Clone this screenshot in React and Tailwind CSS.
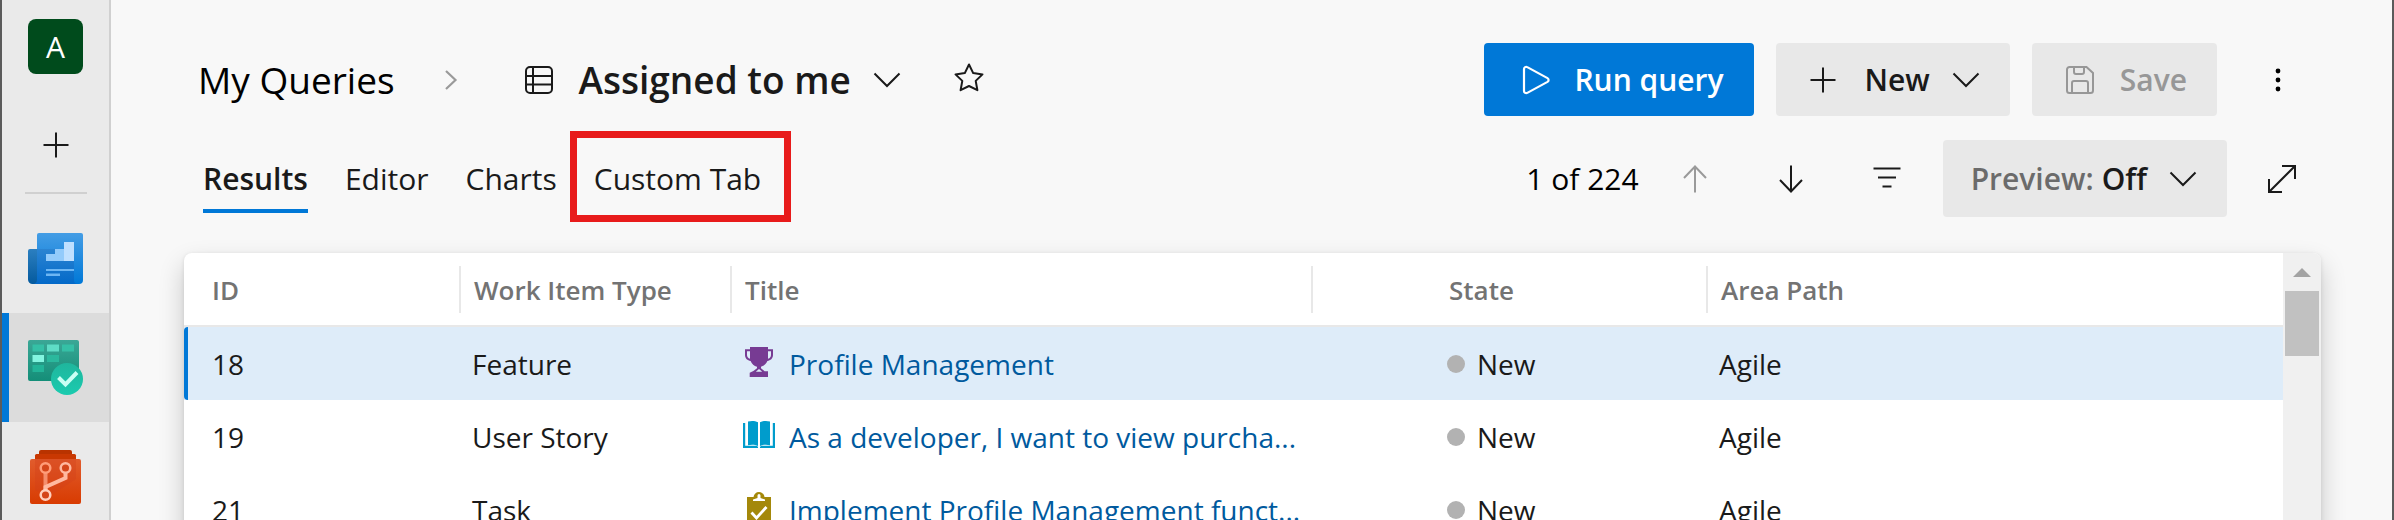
import React from 'react';

function Icon({ children, size = 'size-8', viewBox = '0 0 32 32', className = '' }) {
  return (
    <svg
      aria-hidden="true"
      viewBox={viewBox}
      className={`shrink-0 ${size} ${className}`}
      fill="none"
      stroke="currentColor"
      strokeWidth="2"
    >
      {children}
    </svg>
  );
}

const ChevronDown = () => (
  <Icon>
    <path d="M3.500 9.500 16 22 28.500 9.500" />
  </Icon>
);

const PlusIcon = () => (
  <Icon>
    <path d="M16 3.500v25M3.500 16h25" />
  </Icon>
);

function BoardsOverviewIcon() {
  return (
    <svg aria-hidden="true" viewBox="0 0 55 51" className="w-[55px] h-[51px]">
      <defs>
        <linearGradient id="ov-page" x1="0" y1="0" x2="0" y2="1">
          <stop offset="0" stopColor="#449de5" />
          <stop offset="1" stopColor="#0078d7" />
        </linearGradient>
        <linearGradient id="ov-fold" x1="0" y1="0" x2="0" y2="1">
          <stop offset="0" stopColor="#2b7fc0" />
          <stop offset="1" stopColor="#045a9e" />
        </linearGradient>
        <linearGradient id="ov-shade" x1="0" y1="0" x2="0" y2="1">
          <stop offset="0" stopColor="#2b84d2" />
          <stop offset="1" stopColor="#0369c8" />
        </linearGradient>
      </defs>
      <path d="M11 0h42a2 2 0 0 1 2 2v45a4 4 0 0 1-4 4H9V2a2 2 0 0 1 2-2z" fill="url(#ov-page)" />
      <path d="M9 16h37v31a4 4 0 0 0 4 4H5z" fill="url(#ov-shade)" />
      <path d="M2 16h7v31a4 4 0 0 1-4.500 4A4.500 4.500 0 0 1 0 46.500V18a2 2 0 0 1 2-2z" fill="url(#ov-fold)" />
      <path d="M18 21h9v-5h9v12H18z" fill="#93cbfb" />
      <path d="M36 9h10v19H36z" fill="#bfe0ff" />
      <path d="M18 36h28v2H18zM18 40.500h14v2.500H18z" fill="#6db6f3" />
    </svg>
  );
}

function WorkItemsIcon() {
  return (
    <svg aria-hidden="true" viewBox="0 0 55 55" className="size-[55px]">
      <defs>
        <linearGradient id="wi-board" x1="0" y1="0" x2="0" y2="1">
          <stop offset="0" stopColor="#3ba796" />
          <stop offset="1" stopColor="#148e78" />
        </linearGradient>
        <linearGradient id="wi-badge" x1="0" y1="0" x2="0" y2="1">
          <stop offset="0" stopColor="#1fb69d" />
          <stop offset="1" stopColor="#1bcbaf" />
        </linearGradient>
      </defs>
      <rect width="51" height="41" rx="2" fill="url(#wi-board)" />
      <g fill="#35c0a6">
        <rect x="4.500" y="4.500" width="11.500" height="7" />
        <rect x="34" y="4.500" width="12" height="7" />
        <rect x="19" y="15" width="12" height="7" fill="#2bb89d" />
        <rect x="4.500" y="25" width="11.500" height="7" fill="#22b498" />
      </g>
      <rect x="19" y="4.500" width="12" height="7" fill="#5fdcc6" />
      <rect x="4.500" y="15" width="11.500" height="7" fill="#83f5e0" />
      <circle cx="39" cy="39" r="16" fill="url(#wi-badge)" />
      <path d="m30.500 37.500 7 7L49 32.500" fill="none" stroke="#c9fff4" strokeWidth="4" />
    </svg>
  );
}

function ReposIcon() {
  return (
    <svg aria-hidden="true" viewBox="0 0 51 54" className="w-[51px] h-[54px]">
      <defs>
        <linearGradient id="rp-front" x1="0" y1="0" x2="0" y2="1">
          <stop offset="0" stopColor="#e15c2d" />
          <stop offset="1" stopColor="#d83b01" />
        </linearGradient>
      </defs>
      <rect x="9" y="0" width="33" height="12" rx="2" fill="#b93300" />
      <rect x="5" y="4" width="41" height="12" rx="1.500" fill="#c93802" />
      <rect y="9" width="51" height="45" rx="2" fill="url(#rp-front)" />
      <path d="M5 9h41v20L20 46 5 40z" fill="#d2401a" opacity=".35" />
      <path d="M15.500 23v17" stroke="#f58e6c" strokeWidth="4" />
      <path d="M35.500 22v6L15.500 37v4" fill="none" stroke="#ffb9a0" strokeWidth="4" />
      <g fill="#d5461a" strokeWidth="2.500">
        <circle cx="15.500" cy="18" r="4.800" stroke="#ff9c78" />
        <circle cx="35.500" cy="18" r="4.800" stroke="#ffb9a0" />
        <circle cx="15.500" cy="45" r="4.800" stroke="#ffd0be" />
      </g>
    </svg>
  );
}

const TrophyIcon = () => (
  <svg aria-hidden="true" viewBox="0 0 28 30" className="w-7 h-[30px]">
    <path
      d="M5 0h18v2.300h5V8c0 3.500-2.600 5.500-5.600 6-1.200 2.800-3.500 5-6.400 5.800v1.400l3.600 3h3.400V30H4.700v-4.200L8.400 24l3.600-2.800v-1.400C9.100 19 6.800 16.800 5.600 14 2.600 13.500 0 11.500 0 8V2.300h5zM5 4.300H2V8c0 1.800 1 3.200 3 3.800zm18 0v7.500c2-.6 3-2 3-3.800V4.300zM14 22l-3.200 2.800h6.400z"
      fill="#773b93"
      fillRule="evenodd"
    />
  </svg>
);

const BookIcon = () => (
  <svg aria-hidden="true" viewBox="0 0 32 27" className="w-8 h-[27px]">
    <g fill="#009ccc">
      <path d="M5 .5C8.500-.3 12-.2 15 1.300V25c-3-1.500-6.500-1.600-10-.8zM27 .5C23.500-.3 20-.2 17 1.300V25c3-1.500 6.500-1.600 10-.8z" />
      <path d="M0 2h2.200v22.800h11.300l1.500 1v1.200H0zM32 2h-2.200v22.800H18.500l-1.500 1v1.200h15z" />
    </g>
  </svg>
);

const ClipboardIcon = () => (
  <svg aria-hidden="true" viewBox="0 0 24 32" className="w-6 h-8">
    <path
      d="M0 5h6.500C7 2 9 0 12 0s5 2 5.500 5H24v27H0zM10.500 3.500V6L6 7.500V9h12V7.500L13.500 6V3.500a1.500 1.500 0 0 0-3 0z"
      fill="#a4880a"
      fillRule="evenodd"
    />
    <path d="m4.500 20.500 5 5.500 10-11" fill="none" stroke="#fff" strokeWidth="2.800" />
  </svg>
);

const ROWS = [
  { id: '18', type: 'Feature', icon: <TrophyIcon />, title: 'Profile Management', selected: true },
  { id: '19', type: 'User Story', icon: <BookIcon />, title: 'As a developer, I want to view purcha...' },
  { id: '21', type: 'Task', icon: <ClipboardIcon />, title: 'Implement Profile Management funct...' },
];

function Sidebar() {
  return (
    <nav
      aria-label="Project"
      className="flex w-[109px] shrink-0 flex-col items-center border-r-2 border-[#d0d0d0] bg-[#eaeaea]"
    >
      <a
        href="#project"
        className="mt-[19px] flex size-[55px] shrink-0 items-center justify-center rounded-lg bg-[#004b1c] text-3xl text-white"
      >
        A
      </a>
      <button type="button" aria-label="Add" className="mt-[55px] shrink-0 text-[#1a1a1a]">
        <PlusIcon />
      </button>
      <div className="mt-[31px] h-0.5 w-[62px] shrink-0 bg-[#d0d0d0]" />
      <a
        href="#overview"
        aria-label="Overview"
        className="mt-2.5 flex h-[109px] w-full shrink-0 items-center justify-center"
      >
        <BoardsOverviewIcon />
      </a>
      <a
        href="#boards"
        aria-label="Boards"
        className="flex h-[109px] w-full shrink-0 items-center justify-center border-l-[7px] border-[#0078d7] bg-[#dcdcdc] pr-[7px]"
      >
        <WorkItemsIcon />
      </a>
      <a href="#repos" aria-label="Repos" className="flex h-[109px] w-full shrink-0 items-center justify-center">
        <ReposIcon />
      </a>
    </nav>
  );
}

function TitleBar() {
  return (
    <header className="flex h-[73px] items-center justify-between pl-3.5">
      <div className="flex items-center">
        <a href="#queries" className="text-[37px] text-black">
          My Queries
        </a>
        <Icon className="ml-10 text-[#9a9a9a]">
          <path d="m11 7 9.500 9L11 25" strokeWidth="2.200" />
        </Icon>
        <Icon className="ml-14 text-[#1a1a1a]">
          <rect x="3" y="3" width="26" height="26" rx="4" />
          <path d="M3 12h26M3 20.500h26M10 3v26" />
        </Icon>
        <h1 className="ml-6 text-[37px] font-semibold text-[#1a1a1a]">Assigned to me</h1>
        <button type="button" aria-label="Choose query" className="ml-5 text-[#1a1a1a]">
          <ChevronDown />
        </button>
        <button type="button" aria-label="Favorite" className="ml-[50px] pb-1 text-[#1a1a1a]">
          <Icon>
            <path
              d="m16 2.500 4.200 8.600 9.300 1.300-6.800 6.500 1.700 9.300L16 24l-8.400 4.200 1.700-9.300-6.800-6.500 9.300-1.300z"
              strokeLinejoin="round"
            />
          </Icon>
        </button>
      </div>
      <div className="mr-1 flex items-center gap-[22px] text-3xl font-semibold">
        <button type="button" className="flex h-[73px] items-center gap-[22px] rounded bg-[#0078d7] pr-[30px] pl-9 text-white">
          <Icon>
            <path
              d="M4 5v22a2.200 2.200 0 0 0 3.300 1.900l20.200-11a2.200 2.200 0 0 0 0-3.800L7.300 3.100A2.200 2.200 0 0 0 4 5z"
              strokeWidth="2.200"
            />
          </Icon>
          Run query
        </button>
        <button type="button" className="flex h-[73px] items-center rounded bg-[#e8e8e8] pr-7 pl-[31px] text-[#1a1a1a]">
          <PlusIcon />
          <span className="mr-5 ml-[26px]">New</span>
          <ChevronDown />
        </button>
        <button type="button" disabled className="flex h-[73px] items-center gap-6 rounded bg-[#e8e8e8] pr-[30px] pl-8 text-[#979797]">
          <Icon>
            <path d="M5.500 3h17L29 9v17.500a2.500 2.500 0 0 1-2.500 2.500h-21A2.500 2.500 0 0 1 3 26.500v-21A2.500 2.500 0 0 1 5.500 3z" />
            <path d="M10 3v5a2 2 0 0 0 2 2h6a2 2 0 0 0 2-2V3M8 29V19a2 2 0 0 1 2-2h12a2 2 0 0 1 2 2v10" />
          </Icon>
          Save
        </button>
        <button type="button" aria-label="More actions" className="flex w-[78px] justify-center text-black">
          <Icon>
            <g fill="currentColor" stroke="none">
              <circle cx="16" cy="7" r="2.400" />
              <circle cx="16" cy="16" r="2.400" />
              <circle cx="16" cy="25" r="2.400" />
            </g>
          </Icon>
        </button>
      </div>
    </header>
  );
}

function TabBar() {
  return (
    <div className="mt-6 flex h-[77px] items-center justify-between pl-[19px] text-3xl text-[#1a1a1a]">
      <div role="tablist" className="flex items-center gap-[37px]">
        <button
          type="button"
          role="tab"
          aria-selected="true"
          className="border-y-4 border-t-transparent border-b-[#0078d7] py-3 font-semibold"
        >
          Results
        </button>
        <button type="button" role="tab" aria-selected="false">
          Editor
        </button>
        <button type="button" role="tab" aria-selected="false">
          Charts
        </button>
        <button type="button" role="tab" aria-selected="false" className="relative">
          Custom Tab
          <span className="absolute -top-[30px] -right-[30px] -bottom-[25px] -left-6 border-[7px] border-[#e81b1b]" />
        </button>
      </div>
      <div className="flex items-center">
        <span className="text-black">1 of 224</span>
        <button type="button" aria-label="Previous item" disabled className="ml-10 text-[#9a9a9a]">
          <Icon>
            <path d="M16 29.500V3M5 15 16 3.500 27 15" />
          </Icon>
        </button>
        <button type="button" aria-label="Next item" className="ml-16">
          <Icon>
            <path d="M16 2.500V29M5 17l11 11.500L27 17" />
          </Icon>
        </button>
        <button type="button" aria-label="Filter" className="ml-16">
          <Icon>
            <path d="M2.500 5.500h27M7 14.500h18M11.500 23.500h9" />
          </Icon>
        </button>
        <button type="button" className="ml-10 flex h-[77px] items-center rounded bg-[#e8e8e8] px-7 font-semibold text-[#6b6b6b]">
          Preview:
          <span className="mr-5 ml-2 text-[#1a1a1a]">Off</span>
          <span className="text-[#1a1a1a]">
            <ChevronDown />
          </span>
        </button>
        <button type="button" aria-label="Full screen" className="ml-4 flex w-[78px] justify-center">
          <Icon>
            <path d="M3.500 28.500l25-25M16 3h13v13M3 16v13h13" />
          </Icon>
        </button>
      </div>
    </div>
  );
}

function HeaderCell({ children, divider = true, className = 'pl-[13px]' }) {
  return (
    <th scope="col" className="h-[73px] p-0 text-left font-semibold text-[#737373]">
      <div className={`flex h-[47px] items-center pt-0.5 ${divider ? 'border-r-2 border-[#e8e8e8]' : ''} ${className}`}>
        {children}
      </div>
    </th>
  );
}

function ResultsTable() {
  return (
    <div className="mt-9 flex flex-1 rounded-t-lg bg-white shadow-[0_12px_26px_rgba(0,0,0,0.2),0_1px_4px_rgba(0,0,0,0.1)]">
      <table className="w-full min-w-0 flex-1 table-fixed border-collapse self-start text-[28px] whitespace-nowrap text-[#1a1a1a]">
        <colgroup>
          <col className="w-[277px]" />
          <col className="w-[271px]" />
          <col className="w-[581px]" />
          <col className="w-[395px]" />
          <col />
        </colgroup>
        <thead className="text-[26px]">
          <tr className="border-b-2 border-[#e8e8e8]">
            <HeaderCell className="pl-7">ID</HeaderCell>
            <HeaderCell>Work Item Type</HeaderCell>
            <HeaderCell>Title</HeaderCell>
            <HeaderCell className="pl-[136px]">State</HeaderCell>
            <HeaderCell divider={false}>Area Path</HeaderCell>
          </tr>
        </thead>
        <tbody>
          {ROWS.map((row) => (
            <tr key={row.id} className={row.selected ? 'bg-[#deecf9]' : ''}>
              <td className="h-[73px] p-0">
                <div
                  className={`flex h-[73px] items-center rounded-l-sm border-l-4 pl-6 ${
                    row.selected ? 'border-[#0078d7]' : 'border-transparent'
                  }`}
                >
                  {row.id}
                </div>
              </td>
              <td className="p-0 pl-[11px]">{row.type}</td>
              <td className="p-0 pl-[9px]">
                <div className="flex items-center gap-3">
                  <span className="flex w-9 shrink-0 justify-center pb-1">{row.icon}</span>
                  <a href={`#item-${row.id}`} className="truncate text-[#005a9e]">
                    {row.title}
                  </a>
                </div>
              </td>
              <td className="p-0 pl-[134px]">
                <div className="flex items-center gap-3">
                  <span className="size-[18px] rounded-full bg-[#b2b2b2]" />
                  New
                </div>
              </td>
              <td className="p-0 pl-[11px]">Agile</td>
            </tr>
          ))}
        </tbody>
      </table>
      <div aria-hidden="true" className="flex w-[38px] shrink-0 flex-col items-center rounded-tr-lg bg-[#f0f0f0]">
        <svg viewBox="0 0 18 9" className="mt-[15px] h-[9px] w-[18px]">
          <path d="M9 0l9 9H0z" fill="#a3a3a3" />
        </svg>
        <div className="mt-3.5 h-[65px] w-[34px] bg-[#c1c1c1]" />
      </div>
    </div>
  );
}

export default function App() {
  return (
    <div className="flex h-screen overflow-hidden border-x-2 border-[#5b5b5b] bg-[#f8f8f8] font-['Open_Sans','Noto_Sans',sans-serif]">
      <Sidebar />
      <main className="flex min-w-0 flex-1 flex-col pt-[43px] pr-[71px] pl-[73px]">
        <TitleBar />
        <TabBar />
        <ResultsTable />
      </main>
    </div>
  );
}
